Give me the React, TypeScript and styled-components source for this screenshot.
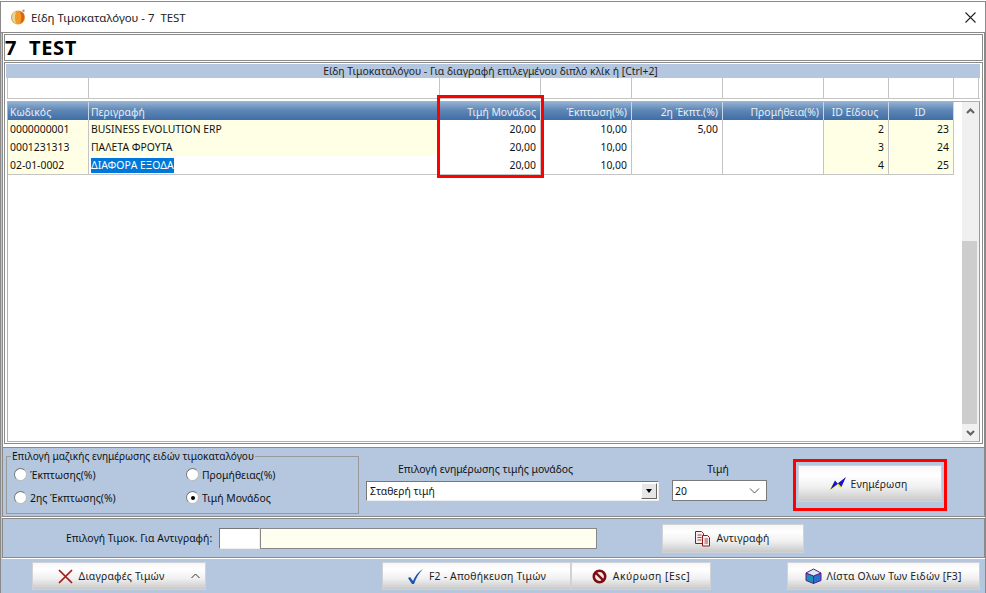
import React from 'react';
import styled, { createGlobalStyle } from 'styled-components';

const Global = createGlobalStyle`
  html, body { margin: 0; padding: 0; background: #fff; }
  body { padding-top: 1px; font-family: "Noto Sans", "Open Sans", sans-serif; font-size: 10.4px; color: #111; }
  * { box-sizing: border-box; }
`;

const GRAY = '#8a8a8a';
const LINE = '#c4c4c4';
const BLUE = '#b4c7df';
const COLS = '81px 351px 101px 91px 91px 101px 65px 65px';

const Windowed = styled.div`
  width: 986px; height: 592px; display: flex; flex-direction: column; overflow: hidden;
  background: ${BLUE}; border: 1px solid ${GRAY}; border-bottom: 0;
`;
const TitleBar = styled.div`
  height: 31px; flex: none; background: #fff; display: flex; align-items: center; padding: 0 9px;
  gap: 5px; font-size: 11.4px; color: #222; border-bottom: 1px solid ${GRAY};
`;
const TitleText = styled.span`flex: 1; white-space: pre;`;
const Body = styled.div`flex: 1; display: flex; flex-direction: column; padding-left: 1px; min-height: 0;`;
const TopFrame = styled.div`
  height: 415px; flex: none; background: #fff; display: flex; flex-direction: column; gap: 1px;
  border: 1px solid ${GRAY}; border-top: 0; padding: 1px 1px 3px;
`;
const NamePanel = styled.div`
  height: 27px; flex: none; background: #fff; border: 1px solid ${GRAY};
  font: 700 20px/26px "Noto Sans", sans-serif; letter-spacing: .7px; color: #000; white-space: pre;
`;
const GridFrame = styled.div`
  height: 382px; flex: none; background: #fff; border: 1px solid ${GRAY}; padding: 1px 2px 0 1px;
  display: flex; flex-direction: column;
`;
const GridCaption = styled.div`
  height: 14px; flex: none; background: ${BLUE}; text-align: center; line-height: 14px; color: #222; padding-right: 5px;
`;
const FilterRow = styled.div`
  height: 21px; flex: none; display: grid; grid-template-columns: ${COLS} 25px; margin-left: 1px;
  border-left: 1px solid ${LINE}; border-bottom: 1px solid ${LINE};
`;
const FilterCell = styled.div`border-right: 1px solid ${LINE};`;
const GridBody = styled.div`
  height: 341px; flex: none; display: flex; position: relative; margin: 2px 0 0 1px;
  border: 1px solid #b0b0b0; border-right-color: #999;
`;
const Table = styled.div`flex: 1; min-width: 0;`;
const HeaderRow = styled.div`display: grid; grid-template-columns: ${COLS}; height: 18px;`;
const HeaderCell = styled.div<{ $align: string }>`
  background: linear-gradient(#93b0d2, #5f87b6 45%, #3f6ea5);
  color: #e8eef6; line-height: 20px; padding: 0 4px 0 2px; text-align: ${p => p.$align};
  border-right: 1px solid #c8d6e6; white-space: nowrap; overflow: hidden;
`;
const DataRow = styled.div`display: grid; grid-template-columns: ${COLS}; height: 18px;`;
const DataCell = styled.div<{ $right?: boolean; $yellow?: boolean }>`
  background: ${p => (p.$yellow ? '#ffffe6' : '#fff')}; color: #111; line-height: 18px;
  padding: 0 4px 0 2px; text-align: ${p => (p.$right ? 'right' : 'left')};
  border-right: 1px solid ${LINE}; border-bottom: 1px solid ${LINE}; white-space: nowrap;
`;
const Selected = styled.span`background: #0078d7; color: #fff; padding: 1px 0; display: inline-block; line-height: 13px;`;
const Scrollbar = styled.div`width: 17px; flex: none; background: #f0f0f0; display: flex; flex-direction: column;`;
const ScrollBtn = styled.div`height: 17px; flex: none; display: flex; align-items: center; justify-content: center;`;
const ScrollTrack = styled.div`flex: 1; display: flex; flex-direction: column; justify-content: flex-end;`;
const ScrollThumb = styled.div`height: 183px; width: 15px; background: #cdcdcd;`;
const PriceHighlight = styled.div`
  position: absolute; left: 429px; top: -7px; width: 107px; height: 83px;
  border: 3px solid #f00; pointer-events: none; z-index: 5;
`;

const UpdatePanel = styled.div`
  height: 69px; flex: none; display: flex; padding: 8px 0 0 3px;
  border: 1px solid ${GRAY}; border-top: 0; box-shadow: 0 1px 0 #fff;
`;
const Fieldset = styled.div`
  width: 353px; height: 58px; flex: none; position: relative; border: 1px solid #9a9a9a;
  display: grid; grid-template-columns: 172px 1fr; grid-auto-rows: 23px; align-content: start; padding: 6px 0 0 7px;
`;
const FieldLegend = styled.span`
  position: absolute; top: -7px; left: 4px; background: ${BLUE}; font-size: 10.1px; line-height: 13px; padding: 0 1px; white-space: nowrap;
`;
const RadioLabel = styled.div`display: flex; align-items: center; gap: 3px;`;
const RadioDot = styled.span<{ $on?: boolean }>`
  width: 13px; height: 13px; border-radius: 50%; background: #fff; border: 1px solid; border-color: #777 #bbb #bbb #777;
  display: inline-flex; align-items: center; justify-content: center;
  &::after { content: ''; width: 4px; height: 4px; border-radius: 50%; background: ${p => (p.$on ? '#000' : 'transparent')}; }
`;
const SelectGroup = styled.div`width: 293px; flex: none; margin: 6px 0 0 7px; display: flex; flex-direction: column;`;
const GroupLabel = styled.div<{ $inset?: number }>`
  text-align: center; height: 14px; line-height: 14px; margin-bottom: 5px; padding-right: ${p => p.$inset ?? 0}px; white-space: nowrap;
`;
const LegacySelect = styled.div`
  height: 20px; background: #fff; display: flex; align-items: center; padding-left: 3px; position: relative;
  border: 1px solid; border-color: #777 #eee #eee #777;
`;
const LegacyBtn = styled.div`
  position: absolute; right: 1px; top: 1px; width: 16px; height: 16px; background: #e6e6e6;
  border: 1px solid; border-color: #fff #666 #666 #fff; display: flex; align-items: center; justify-content: center;
  &::after { content: ''; border: 3px solid transparent; border-top: 4px solid #000; margin-top: 3px; }
`;
const PriceGroup = styled.div`width: 95px; flex: none; margin: 6px 0 0 13px; display: flex; flex-direction: column;`;
const ModernSelect = styled.div`
  height: 21px; margin-top: -1px; background: #fff; border: 1px solid #7a7a7a; display: flex; align-items: center;
  justify-content: space-between; padding: 0 6px 0 2px;
`;
const UpdateBtnFrame = styled.div`
  width: 154px; height: 52px; flex: none; margin: 3px 0 0 26px; border: 3px solid #f00; padding: 3px 2px 6px; display: flex;
`;
const Btn = styled.div<{ $w?: number; $ls?: number; $gap?: number; $shift?: number }>`
  width: ${p => (p.$w ? `${p.$w}px` : '100%')}; height: 100%; flex: none; display: flex; align-items: center; justify-content: center;
  gap: ${p => p.$gap ?? 6}px; padding-right: ${p => p.$shift ?? 0}px;
  background: linear-gradient(#f6f6f6, #fff 25%, #f0f0f0 60%, #c9c9c9); border: 1px solid #cfd3d8;
  color: #222; white-space: nowrap; position: relative; letter-spacing: ${p => p.$ls ?? 0.2}px;
`;
const CopyPanel = styled.div`
  height: 40px; flex: none; margin-top: 1px; display: flex; align-items: center; padding-left: 63px;
  border: 1px solid ${GRAY};
`;
const CopyLabel = styled.div`width: 153px; flex: none; white-space: nowrap;`;
const CodeInput = styled.div`width: 41px; height: 21px; flex: none; background: #fff; border: 1px solid; border-color: #777 #eee #eee #777;`;
const NameInput = styled.div`width: 337px; height: 21px; flex: none; margin: 1px 65px 0 0; background: #fffff0; border: 1px solid #888;`;
const CopyBtnSlot = styled.div`height: 29px; display: flex; flex: none;`;
const BottomBar = styled.div`flex: 1; display: flex; align-items: flex-start; padding: 3px 0 0 30px; border-top: 1px solid #fff;`;
const BarBtn = styled.div`height: 28px; display: flex; flex: none;`;
const Caret = styled.span`position: absolute; right: 5px; top: 10px; display: flex;`;
const Spacer = styled.div<{ $w: number }>`width: ${p => p.$w}px; flex: none;`;

const PeachIcon = () => (
  <svg width="16" height="16" viewBox="0 0 16 16">
    <circle cx="8" cy="8.5" r="7" fill="#f09a2c" />
    <path d="M3.4 3.5C1 7 1.6 12.5 6.5 15 4.5 11.5 4.6 7 6 2.3z" fill="#e6d69a" />
    <path d="M9 2c2.6 2 3 8 1.2 12.6 3.4-1 5.4-6.4 3-10.6z" fill="#d8601c" />
    <circle cx="13.5" cy="1.8" r="1.2" fill="#999" />
  </svg>
);
const CloseIcon = () => (
  <svg width="11" height="11" viewBox="0 0 11 11"><path d="M.5.5l10 10M10.5.5l-10 10" stroke="#222" strokeWidth="1.1" /></svg>
);
const ChevUp = () => (
  <svg width="9" height="6" viewBox="0 0 9 6"><path d="M1 5l3.5-3.5L8 5" fill="none" stroke="#606060" strokeWidth="2" /></svg>
);
const ChevDown = () => (
  <svg width="9" height="6" viewBox="0 0 9 6"><path d="M1 1l3.5 3.5L8 1" fill="none" stroke="#606060" strokeWidth="2" /></svg>
);
const ThinDown = () => (
  <svg width="11" height="6" viewBox="0 0 11 6"><path d="M1 .5l4.5 4.5L10 .5" fill="none" stroke="#555" /></svg>
);
const ThinUp = () => (
  <svg width="9" height="6" viewBox="0 0 9 6"><path d="M.5 5L4.5 1l4 4" fill="none" stroke="#333" /></svg>
);
const BoltIcon = () => (
  <svg width="17" height="14" viewBox="0 0 17 14">
    <path d="M0 14L5 5l2.6 3L16 1l-4.6 10.5-3-3.4z" fill="#f4e838" />
    <path d="M1.4 12.4L6 3.6l2.6 3L17 0l-4.6 10-3-3.4z" fill="#1414d0" />
  </svg>
);
const XIcon = () => (
  <svg width="15" height="15" viewBox="0 0 15 15"><path d="M1 1l13 13M14 1L1 14" stroke="#a81616" strokeWidth="1.7" /></svg>
);
const CheckIcon = () => (
  <svg width="17" height="17" viewBox="0 0 17 17"><path d="M1 10l2-1 3 4C8 8 11 4 16 1c-4 4-7 9-9 15h-2z" fill="#1c55ad" /></svg>
);
const NoIcon = () => (
  <svg width="15" height="15" viewBox="0 0 15 15">
    <circle cx="7.5" cy="7.5" r="5.7" fill="#f4e8e8" stroke="#7a0f12" strokeWidth="2.6" />
    <path d="M3.5 3.5l8 8" stroke="#7a0f12" strokeWidth="2.4" />
  </svg>
);
const CopyIcon = () => (
  <svg width="17" height="17" viewBox="0 0 17 17" fill="#f8eeee" stroke="#8a1c1c">
    <path d="M1.5 1.5h6l2 2v10h-8z" /><path d="M8.5 5.5h5l2 2v8.5h-7z" />
    <path d="M3.5 5h4M3.5 7.5h4M3.5 10h4M10.5 9h3.5M10.5 11h3.5M10.5 13h3.5" strokeWidth=".8" />
  </svg>
);
const BoxIcon = () => (
  <svg width="17" height="16" viewBox="0 0 17 16">
    <path d="M1 5l7.5 3v7.5L1 12.5z" fill="#1b8fb8" stroke="#601a80" />
    <path d="M16 5L8.5 8v7.5l7.5-3z" fill="#2a6fd0" stroke="#601a80" />
    <path d="M8.5 1L16 5 8.5 8 1 5z" fill="#d8e8f4" stroke="#601a80" />
  </svg>
);

const headers: [string, string][] = [
  ['Κωδικός', 'left'], ['Περιγραφή', 'left'], ['Τιμή Μονάδος', 'right'], ['Έκπτωση(%)', 'right'],
  ['2η Έκπτ.(%)', 'right'], ['Προμήθεια(%)', 'right'], ['ID Είδους', 'center'], ['ID', 'center'],
];
const rows = [
  { code: '0000000001', name: 'BUSINESS EVOLUTION ERP', p: '20,00', d: '10,00', d2: '5,00', idE: '2', id: '23', sel: false },
  { code: '0001231313', name: 'ΠΑΛΕΤΑ ΦΡΟΥΤΑ', p: '20,00', d: '10,00', d2: '', idE: '3', id: '24', sel: false },
  { code: '02-01-0002', name: 'ΔΙΑΦΟΡΑ ΕΞΟΔΑ', p: '20,00', d: '10,00', d2: '', idE: '4', id: '25', sel: true },
];

export default function App() {
  return (
    <>
      <Global />
      <Windowed>
        <TitleBar>
          <PeachIcon />
          <TitleText>Είδη Τιμοκαταλόγου - 7  TEST</TitleText>
          <CloseIcon />
        </TitleBar>
        <Body>
          <TopFrame>
            <NamePanel>7  TEST</NamePanel>
            <GridFrame>
              <GridCaption>Είδη Τιμοκαταλόγου - Για διαγραφή επιλεγμένου διπλό κλίκ ή [Ctrl+2]</GridCaption>
              <FilterRow>
                {Array.from({ length: 9 }).map((_, i) => <FilterCell key={i} />)}
              </FilterRow>
              <GridBody>
                <Table>
                  <HeaderRow>
                    {headers.map(([h, a]) => <HeaderCell key={h} $align={a}>{h}</HeaderCell>)}
                  </HeaderRow>
                  {rows.map(r => (
                    <DataRow key={r.code}>
                      <DataCell $yellow>{r.code}</DataCell>
                      <DataCell $yellow={!r.sel}>{r.sel ? <Selected>{r.name}</Selected> : r.name}</DataCell>
                      <DataCell $right>{r.p}</DataCell>
                      <DataCell $right>{r.d}</DataCell>
                      <DataCell $right>{r.d2}</DataCell>
                      <DataCell $right />
                      <DataCell $right $yellow>{r.idE}</DataCell>
                      <DataCell $right $yellow>{r.id}</DataCell>
                    </DataRow>
                  ))}
                </Table>
                <Scrollbar>
                  <ScrollBtn><ChevUp /></ScrollBtn>
                  <ScrollTrack><ScrollThumb /></ScrollTrack>
                  <ScrollBtn><ChevDown /></ScrollBtn>
                </Scrollbar>
                <PriceHighlight />
              </GridBody>
            </GridFrame>
          </TopFrame>
          <UpdatePanel>
            <Fieldset>
              <FieldLegend>Επιλογή μαζικής ενημέρωσης ειδών τιμοκαταλόγου</FieldLegend>
              <RadioLabel><RadioDot />Έκπτωσης(%)</RadioLabel>
              <RadioLabel><RadioDot />Προμήθειας(%)</RadioLabel>
              <RadioLabel><RadioDot />2ης Έκπτωσης(%)</RadioLabel>
              <RadioLabel><RadioDot $on />Τιμή Μονάδος</RadioLabel>
            </Fieldset>
            <SelectGroup>
              <GroupLabel $inset={54}>Επιλογή ενημέρωσης τιμής μονάδος</GroupLabel>
              <LegacySelect>Σταθερή τιμή<LegacyBtn /></LegacySelect>
            </SelectGroup>
            <PriceGroup>
              <GroupLabel $inset={3}>Τιμή</GroupLabel>
              <ModernSelect>20<ThinDown /></ModernSelect>
            </PriceGroup>
            <UpdateBtnFrame>
              <Btn $gap={5} $shift={4} $ls={0.1}><BoltIcon />Ενημέρωση</Btn>
            </UpdateBtnFrame>
          </UpdatePanel>
          <CopyPanel>
            <CopyLabel>Επιλογή Τιμοκ. Για Αντιγραφή:</CopyLabel>
            <CodeInput />
            <NameInput />
            <CopyBtnSlot><Btn $w={142} $gap={5} $shift={2} $ls={0.1}><CopyIcon />Αντιγραφή</Btn></CopyBtnSlot>
          </CopyPanel>
          <BottomBar>
            <BarBtn><Btn $w={174}><XIcon />Διαγραφές Τιμών<Spacer $w={10} /><Caret><ThinUp /></Caret></Btn></BarBtn>
            <Spacer $w={176} />
            <BarBtn><Btn $w={189} $gap={5}><CheckIcon />F2 - Αποθήκευση Τιμών</Btn></BarBtn>
            <BarBtn><Btn $w={140} $ls={0.5}><NoIcon />Ακύρωση [Esc]</Btn></BarBtn>
            <Spacer $w={76} />
            <BarBtn><Btn $w={193} $gap={4}><BoxIcon />Λίστα Ολων Των Ειδών [F3]</Btn></BarBtn>
          </BottomBar>
        </Body>
      </Windowed>
    </>
  );
}
